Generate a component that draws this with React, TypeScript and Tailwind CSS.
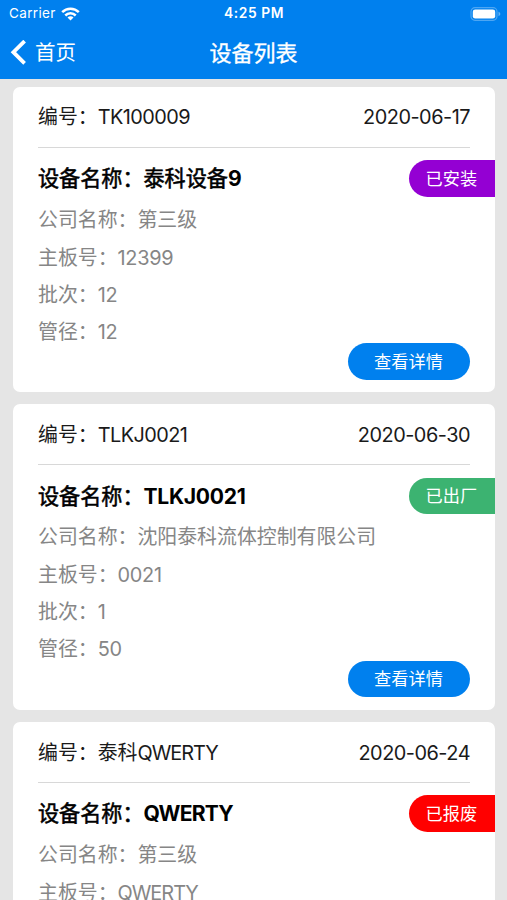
type Device = {
  code: string;
  date: string;
  name: string;
  company: string;
  board: string;
  batch: string;
  diameter: string;
  status: "installed" | "shipped" | "scrapped";
};

const devices: Device[] = [
  { code: "TK100009", date: "2020-06-17", name: "泰科设备9", company: "第三级", board: "12399", batch: "12", diameter: "12", status: "installed" },
  { code: "TLKJ0021", date: "2020-06-30", name: "TLKJ0021", company: "沈阳泰科流体控制有限公司", board: "0021", batch: "1", diameter: "50", status: "shipped" },
  { code: "泰科QWERTY", date: "2020-06-24", name: "QWERTY", company: "第三级", board: "QWERTY", batch: "1", diameter: "50", status: "scrapped" },
];

const statuses = {
  installed: { label: "已安装", color: "bg-[#9400d3]" },
  shipped: { label: "已出厂", color: "bg-[#3cb371]" },
  scrapped: { label: "已报废", color: "bg-[#ff0000]" },
};

// Latin runs get their own class, Chinese characters keep the parent's style.
// Runs of capitals only are set tighter than runs with digits.
function Mixed({ text, latin, caps }: { text: string; latin: string; caps: string }) {
  return (
    <>
      {text.split(/([\x20-\x7e]+)/).filter(Boolean).map((part, i) =>
        /^[\x20-\x7e]/.test(part) ? (
          <span key={i} className={/^[A-Z]+$/.test(part) ? caps : latin}>{part}</span>
        ) : (
          part
        )
      )}
    </>
  );
}

function StatusBar() {
  return (
    <div className="grid h-[27px] grid-cols-3 items-center pl-[9px] pr-[6px] text-[13.5px] leading-none">
      <div className="flex items-center gap-[5px]">
        <span className="tracking-[0.35px]">Carrier</span>
        <svg width="19" height="14" viewBox="0 0 19 14" fill="none" stroke="currentColor" strokeWidth="2.5">
          <path d="M1.2 5.2a11.7 11.7 0 0 1 16.6 0" />
          <path d="M4.3 8.5a7.3 7.3 0 0 1 10.4 0" />
          <path d="M9.5 13.6 6.5 10.6a4.2 4.2 0 0 1 6 0Z" fill="currentColor" stroke="none" />
        </svg>
      </div>
      <span className="-ml-[2px] text-center text-[13.8px] font-semibold tracking-[0.6px]">4:25 PM</span>
      <svg className="justify-self-end" width="31" height="14" viewBox="0 0 31 14">
        <rect x="1" y="0.7" width="26" height="12.6" rx="4" fill="none" stroke="white" strokeOpacity="0.3" strokeWidth="1.2" />
        <rect x="2.8" y="2.4" width="22.4" height="9.2" rx="2.4" fill="white" />
        <path d="M28.5 4.8v4.4c1.1-.4 1.8-1.2 1.8-2.2s-.7-1.8-1.8-2.2Z" fill="white" fillOpacity="0.4" />
      </svg>
    </div>
  );
}

function NavBar() {
  return (
    <div className="grid h-[52px] grid-cols-3 items-center px-[10px]">
      <button className="flex items-center gap-[9px] text-[20.5px] leading-none">
        <svg width="16" height="26" viewBox="0 0 16 26" fill="none" stroke="currentColor" strokeWidth="3.8">
          <path d="M14.6 1.1 3.4 12.2l11.2 11.1" />
        </svg>
        首页
      </button>
      <h1 className="text-center text-[22px] font-normal leading-none [-webkit-text-stroke:0.35px_currentColor]">设备列表</h1>
    </div>
  );
}

function Row({ label, value }: { label: string; value: string }) {
  return (
    <div className="flex h-[37px] items-center whitespace-nowrap">
      <span>
        {label}：<Mixed text={value} latin="tracking-[-0.3px]" caps="tracking-[-1px]" />
      </span>
    </div>
  );
}

function DeviceCard({ device }: { device: Device }) {
  const status = statuses[device.status];

  return (
    <li className="h-[305.6px] shrink-0 rounded-[7px] bg-white pl-[25px] text-[19.9px] leading-none">
      <div className="mr-[25px] flex h-[61.2px] items-center justify-between border-b border-[#d8d8d8] pt-[3px] text-[#1a1a1a]">
        <span>
          编号：<Mixed text={device.code} latin="tracking-[-0.55px]" caps="tracking-[-1px]" />
        </span>
        <span className="tracking-[-0.5px]">{device.date}</span>
      </div>
      <div className="mt-[12.3px] flex h-[36.6px] items-center justify-between">
        <span className="text-[21.1px] text-black [-webkit-text-stroke:0.55px_currentColor]">
          设备名称：
          <Mixed
            text={device.name}
            latin="font-bold tracking-[-0.3px] [-webkit-text-stroke:0]"
            caps="font-bold tracking-[-0.8px] [-webkit-text-stroke:0]"
          />
        </span>
        <span className={`flex h-full w-[86px] items-center rounded-l-full pl-[16.5px] text-[17.2px] text-white ${status.color}`}>
          {status.label}
        </span>
      </div>
      <div className="mr-[25px] flex pt-[5.5px] text-[#868686]">
        <div className="min-w-0 flex-1">
          <div className="mb-px">
            <Row label="公司名称" value={device.company} />
          </div>
          <Row label="主板号" value={device.board} />
          <Row label="批次" value={device.batch} />
          <Row label="管径" value={device.diameter} />
        </div>
        <button className="-mb-[28.5px] flex h-[36.6px] w-[122px] shrink-0 items-center justify-center self-end rounded-full bg-[#0080ee] pr-[1px] text-[17.2px] text-white">
          查看详情
        </button>
      </div>
    </li>
  );
}

export default function App() {
  return (
    <div className="flex h-[900px] w-[507px] flex-col overflow-hidden bg-[#e5e5e5] font-['Inter','Noto_Sans_CJK_SC',sans-serif]">
      <header className="shrink-0 bg-[#0080ee] text-white">
        <StatusBar />
        <NavBar />
      </header>
      <ul className="flex flex-1 flex-col gap-[12px] overflow-hidden pl-[13px] pr-[12px] pt-[7.7px]">
        {devices.map((device) => (
          <DeviceCard key={device.code} device={device} />
        ))}
      </ul>
    </div>
  );
}
